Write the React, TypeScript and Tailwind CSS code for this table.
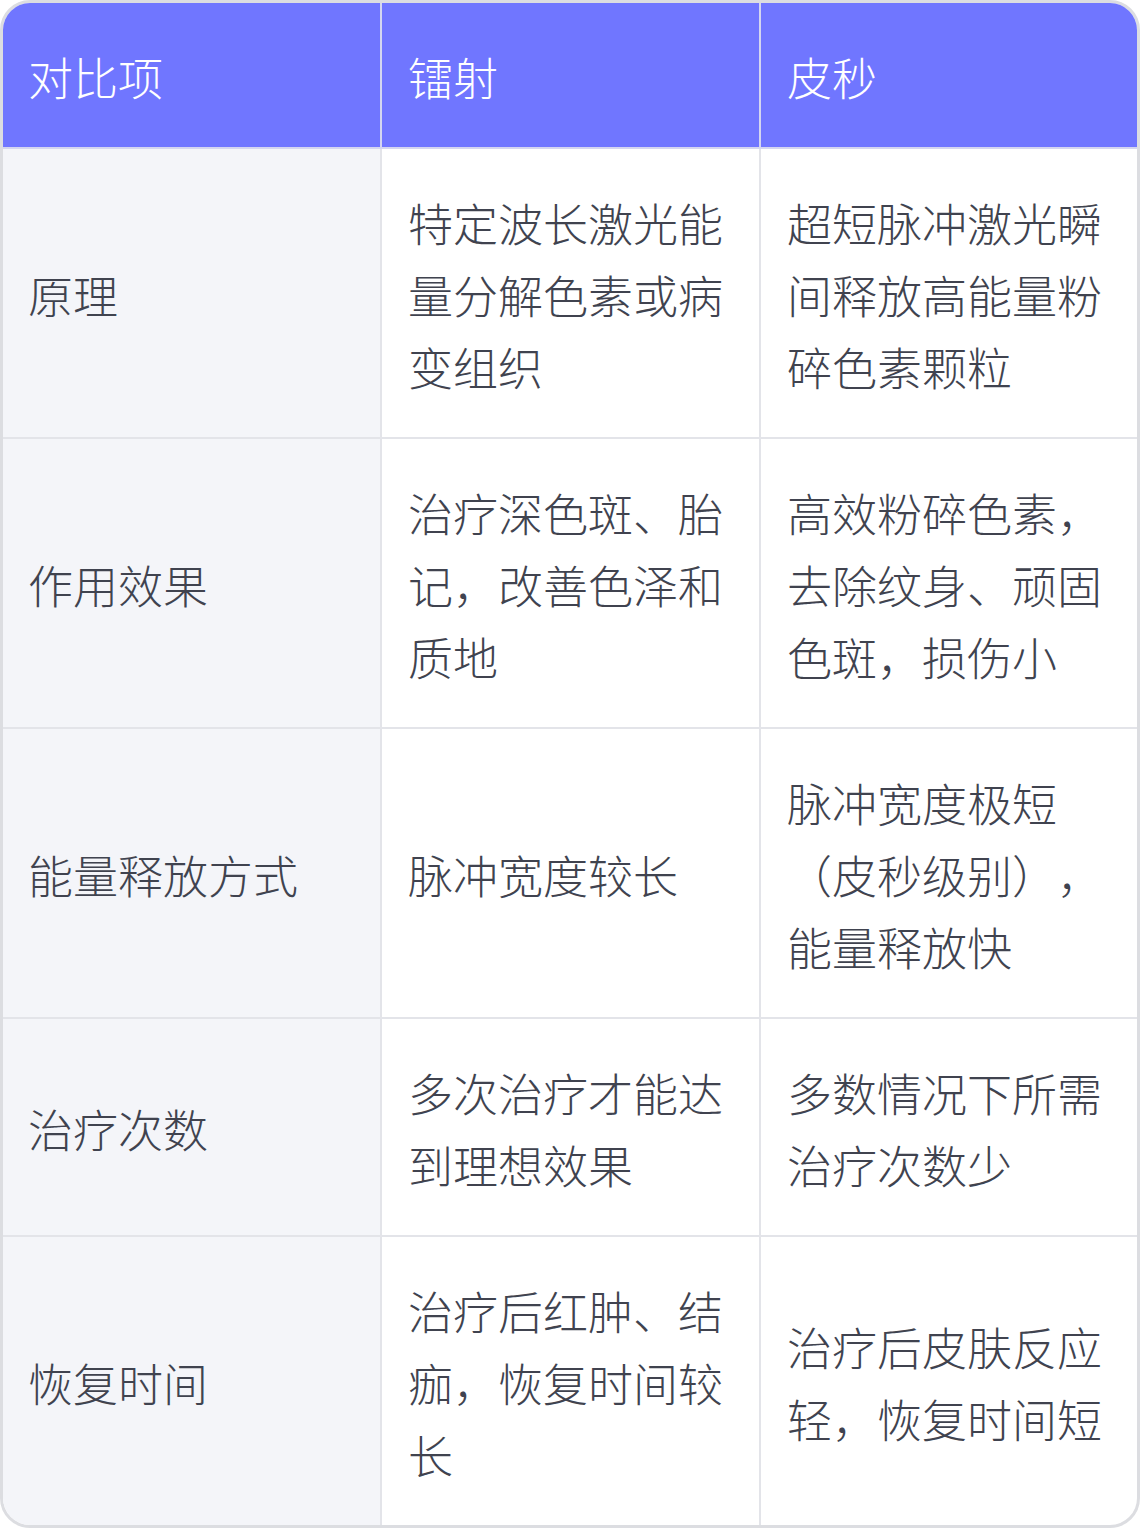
const rows = [
  {
    item: "原理",
    laser: "特定波长激光能量分解色素或病变组织",
    pico: "超短脉冲激光瞬间释放高能量粉碎色素颗粒",
  },
  {
    item: "作用效果",
    laser: "治疗深色斑、胎记，改善色泽和质地",
    pico: "高效粉碎色素，去除纹身、顽固色斑，损伤小",
  },
  {
    item: "能量释放方式",
    laser: "脉冲宽度较长",
    pico: "脉冲宽度极短（皮秒级别），能量释放快",
  },
  {
    item: "治疗次数",
    laser: "多次治疗才能达到理想效果",
    pico: "多数情况下所需治疗次数少",
  },
  {
    item: "恢复时间",
    laser: "治疗后红肿、结痂，恢复时间较长",
    pico: "治疗后皮肤反应轻，恢复时间短",
  },
];

const font = {
  fontFamily: '"Noto Sans CJK SC", "Noto Sans", sans-serif',
};

export default function App() {
  return (
    <div className="w-[1140px] bg-white [text-spacing-trim:space-all]" style={font}>
      <div className="overflow-hidden rounded-[30px] border-[3px] border-[#dcdde1]">
        {/* header */}
        <div className="grid grid-cols-[379px_379px_1fr] bg-[#7076ff] text-[45px] font-light leading-[72px] text-white">
          <div className="border-r-2 border-b-2 border-[#d4d6f0] pl-[25px] pr-[27px] pt-[38px] pb-[34px]">对比项</div>
          <div className="border-r-2 border-b-2 border-[#d4d6f0] pl-[26px] pr-[28px] pt-[38px] pb-[34px]">镭射</div>
          <div className="border-b-2 border-[#d4d6f0] pl-[26px] pr-[28px] pt-[38px] pb-[34px]">皮秒</div>
        </div>
        {rows.map((r, i) => {
          const last = i === rows.length - 1;
          return (
            <div
              key={r.item}
              className="grid grid-cols-[379px_379px_1fr] text-[45px] font-light leading-[72px] text-[#40434f]"
            >
              <div
                className={`flex items-center border-r-2 border-[#e3e4e9] bg-[#f4f5f9] pl-[25px] pr-[27px] pt-[38px] pb-[34px] ${last ? "" : "border-b-2"}`}
              >
                {r.item}
              </div>
              <div
                className={`flex items-center border-r-2 border-[#e3e4e9] pl-[26px] pr-[28px] pt-[38px] pb-[34px] ${last ? "" : "border-b-2"}`}
              >
                {r.laser}
              </div>
              <div
                className={`flex items-center border-[#e3e4e9] pl-[26px] pr-[28px] pt-[38px] pb-[34px] ${last ? "" : "border-b-2"}`}
              >
                {r.pico}
              </div>
            </div>
          );
        })}
      </div>
    </div>
  );
}
